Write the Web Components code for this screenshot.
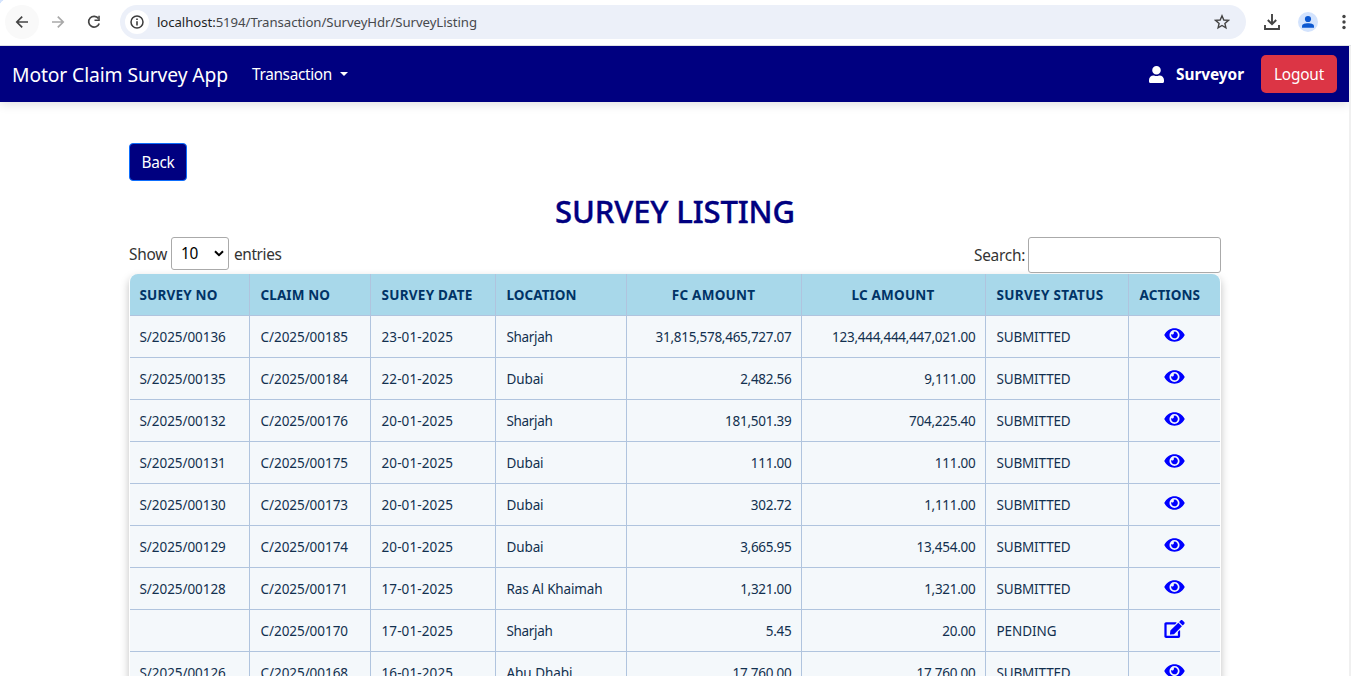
<!DOCTYPE html>
<html lang="en"><head><meta charset="utf-8"><title>Survey Listing</title>
<style>
html,body{margin:0;height:676px;overflow:hidden;background:#fff}
body{font:15.4px/24px "Noto Sans","Open Sans",sans-serif;color:#333}
survey-page{display:flex;flex-direction:column;height:676px}
</style></head><body>
<survey-page></survey-page>
<script>
/* Text whose tracking is adjusted to fill the advance given in "w". */
class FitText extends HTMLElement{
  constructor(){super();this.attachShadow({mode:'open'}).innerHTML='<style>:host{display:inline-block;white-space:nowrap}span{display:inline-block}</style><span><slot></slot></span>';}
  connectedCallback(){
    const fit=()=>{const s=this.shadowRoot.querySelector('span'),w=+this.getAttribute('w'),n=this.textContent.length;
      if(!w||!n)return;s.style.letterSpacing='0';const m=s.getBoundingClientRect().width;
      s.style.letterSpacing=((w-m)/n)+'px';};
    requestAnimationFrame(fit);
  }
}
customElements.define('fit-text',FitText);

const ICONS={
 back:'<svg width="16" height="16" viewBox="0 0 16 16" fill="none" stroke="#444" stroke-width="1.7"><path d="M14 8H3M8.2 2.6 2.8 8l5.4 5.4"/></svg>',
 forward:'<svg width="16" height="16" viewBox="0 0 16 16" fill="none" stroke="#a9a9a9" stroke-width="1.7"><path d="M2 8h11M7.8 2.6 13.2 8l-5.4 5.4"/></svg>',
 reload:'<svg width="16" height="16" viewBox="0 0 16 16"><path d="M12.5 4.6A5.4 5.4 0 1 0 13.2 9.4" fill="none" stroke="#444" stroke-width="1.7"/><path d="M13.8 1.8v5.3H8.5V5.6h3.8V1.8z" fill="#444"/></svg>',
 info:'<svg width="14" height="14" viewBox="0 0 14 14"><circle cx="7" cy="7" r="6" fill="none" stroke="#3c3c3c" stroke-width="1.5"/><path d="M6.2 6.2h1.6V10.5H6.2zM6.2 3.5h1.6v1.6H6.2z" fill="#3c3c3c"/></svg>',
 star:'<svg width="16" height="16" viewBox="0 0 16 16"><path d="M8 1.8 9.8 6l4.6.4-3.5 3 1 4.5L8 11.5l-3.9 2.4 1-4.5-3.5-3L6.200 6z" fill="none" stroke="#444" stroke-width="1.4"/></svg>',
 download:'<svg width="16" height="16" viewBox="0 0 16 16" fill="none" stroke="#444" stroke-width="1.9"><path d="M8 0v10M3.8 6 8 10.200 12.200 6M1 11v4h14v-4"/></svg>',
 profile:'<svg width="20" height="20" viewBox="0 0 20 20"><circle cx="10" cy="10" r="10" fill="#d3e3fd"/><circle cx="10" cy="7" r="3.100" fill="#0b57d0"/><path d="M4 15.800v-1.600C4 12 7 11.200 10 11.200s6 .8 6 3v1.600z" fill="#0b57d0"/></svg>',
 dots:'<svg width="4" height="16" viewBox="0 0 4 16" fill="#444"><circle cx="2" cy="2.500" r="1.700"/><circle cx="2" cy="8" r="1.700"/><circle cx="2" cy="13.500" r="1.700"/></svg>',
 user:'<svg width="15" height="17" viewBox="0 0 448 512" preserveAspectRatio="none"><path fill="#fff" d="M224 256c70.700 0 128-57.300 128-128S294.700 0 224 0 96 57.300 96 128s57.300 128 128 128zm89.600 32h-16.700c-22.200 10.200-46.900 16-72.900 16s-50.600-5.800-72.900-16h-16.700C60.200 288 0 348.200 0 422.400V464c0 26.500 21.500 48 48 48h352c26.500 0 48-21.500 48-48v-41.600c0-74.200-60.200-134.400-134.400-134.400z"/></svg>',
 eye:'<svg width="21" height="18" viewBox="0 0 576 512"><path fill="#00f" d="M572.520 241.400C518.290 135.590 410.930 64 288 64S57.680 135.640 3.480 241.410a32.350 32.350 0 0 0 0 29.190C57.710 376.410 165.070 448 288 448s230.320-71.640 284.520-177.410a32.350 32.350 0 0 0 0-29.190zM288 400a144 144 0 1 1 144-144 143.930 143.930 0 0 1-144 144zm0-240a95.310 95.310 0 0 0-25.310 3.790 47.850 47.850 0 0 1-66.900 66.900A95.780 95.780 0 1 0 288 160z"/></svg>',
 edit:'<svg width="21" height="18" viewBox="0 0 576 512"><path fill="#00f" d="M402.600 83.200l90.200 90.200c3.800 3.800 3.800 10 0 13.800L274.400 405.600l-92.800 10.300c-12.400 1.400-22.900-9.100-21.500-21.500l10.300-92.800L388.800 83.200c3.800-3.800 10-3.800 13.800 0zm162-22.900l-48.800-48.800c-15.200-15.200-39.900-15.200-55.200 0l-35.400 35.400c-3.800 3.800-3.800 10 0 13.800l90.200 90.200c3.800 3.800 10 3.800 13.800 0l35.400-35.400c15.200-15.300 15.200-40 0-55.200zM384 346.200V448H64V128h229.800c3.200 0 6.200-1.300 8.500-3.500l40-40c7.600-7.600 2.200-20.500-8.500-20.500H48C21.500 64 0 85.500 0 112v352c0 26.500 21.500 48 48 48h352c26.500 0 48-21.500 48-48V306.200c0-10.700-12.900-16-20.500-8.500l-40 40c-2.200 2.300-3.500 5.300-3.500 8.500z"/></svg>'
};
class UiIcon extends HTMLElement{
  constructor(){super();this.attachShadow({mode:'open'});}
  connectedCallback(){this.shadowRoot.innerHTML='<style>:host{display:inline-flex;flex:none}svg{display:block}</style>'+ICONS[this.getAttribute('name')];}
}
customElements.define('ui-icon',UiIcon);

const define=(tag,html)=>customElements.define(tag,class extends HTMLElement{
  constructor(){super();this.attachShadow({mode:'open'}).innerHTML=html;}
});

define('browser-bar',`<style>
:host{display:flex;box-sizing:border-box;height:46px;flex:none;align-items:center;padding:0 5px 2px 5px;background:radial-gradient(circle at 6px 6px,#fff 6px,#d3e3fd 6.500px) 0 0/6px 6px no-repeat #fff;border-bottom:1px solid #dfe1e5}
.b{width:34px;height:34px;border-radius:50%;display:flex;align-items:center;justify-content:center;margin-right:2px;flex:none}
.b.on{background:#f9f9f9}
.url{display:flex;align-items:center;box-sizing:border-box;width:1126px;height:34px;margin-left:7px;border-radius:17px;background:#ecf0f9;padding:0 16px 0 5px;color:#47494d;font-size:13.200px;flex:none}
.i{width:24px;height:24px;border-radius:50%;background:#fff;display:flex;align-items:center;justify-content:center;margin-right:8px}
b{font-weight:400;color:#1f1f1f}
.star{margin-left:auto}
.dl{margin-left:18px}.pr{margin-left:18px}.dt{margin-left:24px}
</style>
<div class="b on"><ui-icon name="back"></ui-icon></div><div class="b"><ui-icon name="forward"></ui-icon></div><div class="b"><ui-icon name="reload"></ui-icon></div>
<div class="url"><div class="i"><ui-icon name="info"></ui-icon></div><fit-text w="320"><b>localhost:</b>5194/Transaction/SurveyHdr/SurveyListing</fit-text><ui-icon class="star" name="star"></ui-icon></div>
<ui-icon class="dl" name="download"></ui-icon><ui-icon class="pr" name="profile"></ui-icon><ui-icon class="dt" name="dots"></ui-icon>`);

define('nav-bar',`<style>
:host{display:flex;box-sizing:border-box;height:56px;flex:none;align-items:center;background:navy;color:#fff;padding:0 12px;box-shadow:0 2px 10px rgba(0,0,0,.13)}
fit-text{padding-top:2px}
.brand{font-size:19.300px;margin-right:24px}
.caret{border:4.500px solid transparent;border-top-color:#fff;border-bottom:0;margin-left:8px}
.user{display:flex;align-items:center;margin-left:auto;font-weight:700}
.user ui-icon{margin-right:12px}
.out{box-sizing:border-box;width:76px;height:38px;margin-left:17px;border-radius:5px;background:#dc3545;display:flex;align-items:center;justify-content:center}
</style>
<fit-text class="brand" w="216">Motor Claim Survey App</fit-text><fit-text w="80">Transaction</fit-text><span class="caret"></span>
<span class="user"><ui-icon name="user"></ui-icon><fit-text w="68">Surveyor</fit-text></span><span class="out"><fit-text w="50">Logout</fit-text></span>`);

define('list-controls',`<style>
:host{display:flex;height:37px;align-items:flex-start;color:#333}
.l,.r{display:flex;align-items:center}
.l{height:34px}.r{height:36px;margin-left:auto}
.l>fit-text{padding-top:2px}
.r>fit-text{padding-top:1px}
.sel{box-sizing:border-box;width:58px;height:33px;border:1px solid #aaa;border-radius:3px;margin:0 5px 1px 4px;padding:0 4px 0 9px;display:flex;align-items:center;justify-content:space-between;color:#000}
.sel fit-text{padding-top:1px}
input{box-sizing:border-box;width:193px;height:36px;border:1px solid #aaa;border-radius:3px;margin:0 0 0 3px;background:#fff}
</style>
<div class="l"><fit-text w="38">Show</fit-text><div class="sel"><fit-text w="17.200">10</fit-text><svg width="10" height="7" viewBox="0 0 10 7"><path d="M1 1.300 5 5.200 9 1.300" fill="none" stroke="#000" stroke-width="2"/></svg></div><fit-text w="47.500">entries</fit-text></div>
<div class="r"><fit-text w="51">Search:</fit-text><input aria-label="Search"></div>`);

const ROWS=[
['S/2025/00136','C/2025/00185','23-01-2025','Sharjah','31,815,578,465,727.07','123,444,444,447,021.00','SUBMITTED'],
['S/2025/00135','C/2025/00184','22-01-2025','Dubai','2,482.56','9,111.00','SUBMITTED'],
['S/2025/00132','C/2025/00176','20-01-2025','Sharjah','181,501.39','704,225.40','SUBMITTED'],
['S/2025/00131','C/2025/00175','20-01-2025','Dubai','111.00','111.00','SUBMITTED'],
['S/2025/00130','C/2025/00173','20-01-2025','Dubai','302.72','1,111.00','SUBMITTED'],
['S/2025/00129','C/2025/00174','20-01-2025','Dubai','3,665.95','13,454.00','SUBMITTED'],
['S/2025/00128','C/2025/00171','17-01-2025','Ras Al Khaimah','1,321.00','1,321.00','SUBMITTED'],
['','C/2025/00170','17-01-2025','Sharjah','5.45','20.00','PENDING'],
['S/2025/00126','C/2025/00168','16-01-2025','Abu Dhabi','17,760.00','17,760.00','SUBMITTED']];
const HEAD=[['SURVEY NO',78],['CLAIM NO',69.500],['SURVEY DATE',91],['LOCATION',70],['FC AMOUNT',83.500],['LC AMOUNT',83],['SURVEY STATUS',107],['ACTIONS',60.500]];
const WIDTHS={'Sharjah':46,'Dubai':37,'Ras Al Khaimah':96,'Abu Dhabi':66,'SUBMITTED':74,'PENDING':60};
const advance=t=>{if(WIDTHS[t])return WIDTHS[t];let w=0;for(const c of t)w+=/\d/.test(c)?7.546:/[,.]/.test(c)?3.040:c==='-'?5.600:c==='/'?5.450:c==='S'?7.440:8.670;return w;};
customElements.define('survey-table',class extends HTMLElement{
  constructor(){super();
    const cell=(t,w)=>t?`<fit-text w="${w}">${t}</fit-text>`:'';
    this.attachShadow({mode:'open'}).innerHTML=`<style>
:host{display:block;box-sizing:border-box;width:1092px;padding:0 1px;border-radius:8px 8px 0 0;background:#fff;font-size:13.500px;color:#003366;box-shadow:0 4px 8px rgba(0,0,0,.25)}
.grid{border-radius:8px 8px 0 0;overflow:hidden;background:#f4f8fb}
.row{display:grid;grid-template-columns:120px 121px 125px 131px 175px 184px 143px 91px;height:42px}
.row>div{box-sizing:border-box;border-right:1px solid #b0c4de;border-bottom:1px solid #b0c4de;padding:0 9.500px 0 10.500px;display:flex;align-items:center}
.row>div:first-child{padding-left:9.500px}
.row>div:last-child{border-right:0}
.head{background:#a8d8ea;font-weight:700}
.head>div:nth-child(5),.head>div:nth-child(6){justify-content:center;padding:0 10px 0 9px}
.body>div:nth-child(5),.body>div:nth-child(6){justify-content:flex-end}
.body>div:last-child{justify-content:center;padding:0 0 4px}
.body{color:#12304f}
</style><div class="grid"><div class="row head">${HEAD.map(h=>`<div>${cell(h[0],h[1])}</div>`).join('')}</div>`+
    ROWS.map(r=>`<div class="row body">${r.map(t=>`<div>${cell(t,advance(t))}</div>`).join('')}<div><ui-icon name="${r[6]==='PENDING'?'edit':'eye'}"></ui-icon></div></div>`).join('')+'</div>';
  }
});

define('survey-page',`<style>
:host{display:flex;flex-direction:column;overflow:hidden}
.view{display:flex;flex-direction:column;flex:1;min-height:0;overflow:hidden;border-right:2px solid #f0f0f0}
main{width:1092px;margin-left:129px;padding-top:41px}
.back{box-sizing:border-box;width:58px;height:38px;border:1px solid #0d6efd;border-radius:4px;background:navy;color:#fff;display:flex;align-items:center;justify-content:center}
.back fit-text{padding-top:2px}
h2{margin:11px 0 6px;height:39px;line-height:39px;text-align:center;font-size:31px;font-weight:500;color:navy;-webkit-text-stroke:.4px navy}
</style>
<browser-bar></browser-bar>
<div class="view"><nav-bar></nav-bar>
<main><div class="back"><fit-text w="33">Back</fit-text></div>
<h2><fit-text w="240">SURVEY LISTING</fit-text></h2>
<list-controls></list-controls><survey-table></survey-table></main></div>`);
</script></body></html>
